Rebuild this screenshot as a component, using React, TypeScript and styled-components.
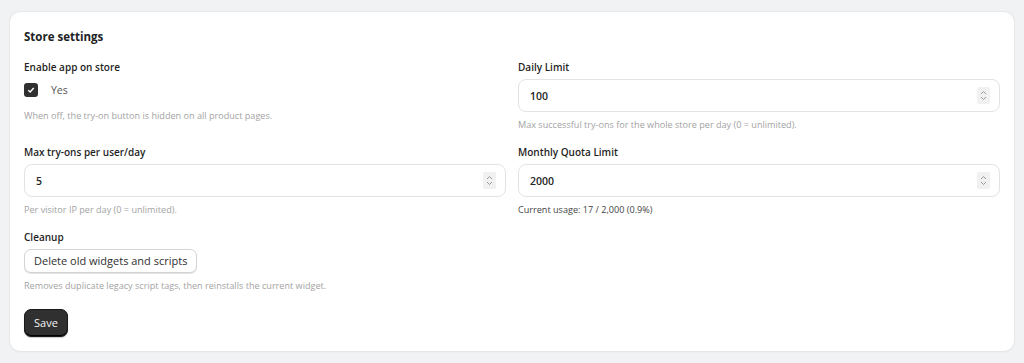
import React from 'react';
import styled, {createGlobalStyle} from 'styled-components';

const GlobalStyle = createGlobalStyle`
  body {
    margin: 0;
    background: #f1f2f4;
    font-family: "Open Sans", "Liberation Sans", sans-serif;
    color: #202223;
  }
`;

const Page = styled.div`
  padding: 12px 10px;
`;

const Card = styled.section`
  background: #fff;
  border-radius: 10px;
  box-shadow: 0 0 0 1px #e6e7e9, 0 1px 2px rgba(0, 0, 0, 0.06);
  padding: 17px 14px 14px;
`;

const Title = styled.h2`
  margin: 0 0 15px;
  font-size: 11.5px;
  font-weight: 700;
  line-height: 16px;
`;

const Grid = styled.div`
  display: grid;
  grid-template-columns: 1fr 1fr;
  column-gap: 12px;
  row-gap: 14px;
`;

const Field = styled.div`
  display: flex;
  flex-direction: column;
  align-items: flex-start;
`;

const Label = styled.div`
  font-size: 10px;
  font-weight: 600;
  line-height: 14px;
  margin-bottom: 5px;
  color: #1f1f1f;
`;

const Help = styled.div<{$dark?: boolean}>`
  font-size: 9.1px;
  line-height: 12px;
  margin-top: 7px;
  color: ${p => (p.$dark ? '#444' : '#a3a3a3')};
`;

const CheckRow = styled.label`
  display: flex;
  align-items: center;
  gap: 13px;
  font-size: 10.5px;
  color: #555;
  height: 20px;
  margin: 1px 0 3px;
`;

const Box = styled.span`
  width: 14px;
  height: 14px;
  border-radius: 3px;
  background: #303030;
  display: flex;
  align-items: center;
  justify-content: center;
`;

const InputBox = styled.div`
  align-self: stretch;
  display: flex;
  align-items: center;
  height: 33px;
  border: 1px solid #e3e3e3;
  border-radius: 8px;
  padding: 0 9px 0 11px;
  box-sizing: border-box;
`;

const Input = styled.input`
  flex: 1;
  border: 0;
  outline: none;
  font: inherit;
  font-size: 10.5px;
  font-weight: 600;
  color: #262626;
  padding: 0;
  background: transparent;
`;

const Spinner = styled.span`
  width: 13px;
  height: 17px;
  background: #f1f1f1;
  border-radius: 2px;
  display: flex;
  align-items: center;
  justify-content: center;
`;

const Button = styled.button<{$primary?: boolean}>`
  font-family: inherit;
  font-size: 11px;
  line-height: 14px;
  border-radius: 7px;
  cursor: pointer;
  padding: ${p => (p.$primary ? '6px 9px' : '4px 9px')};
  color: ${p => (p.$primary ? '#f3f3f3' : '#303030')};
  background: ${p => (p.$primary ? '#303030' : '#fff')};
  border: 1px solid ${p => (p.$primary ? '#1a1a1a' : '#d4d4d4')};
  box-shadow: ${p =>
    p.$primary ? 'inset 0 -1px 0 #000, 0 1px 1px rgba(0,0,0,0.2)' : '0 1px 0 #e3e3e3'};
`;

const SaveRow = styled.div`
  margin-top: 17px;
`;

function NumberField({label, value, help, dark}: {label: string; value: string; help: string; dark?: boolean}) {
  return (
    <Field>
      <Label>{label}</Label>
      <InputBox>
        <Input defaultValue={value} />
        <Spinner>
          <svg width="7" height="11" viewBox="0 0 7 11" fill="none" stroke="#9a9a9a" strokeWidth="1">
            <path d="M1 4 L3.5 1.5 L6 4" />
            <path d="M1 7 L3.5 9.5 L6 7" />
          </svg>
        </Spinner>
      </InputBox>
      <Help $dark={dark}>{help}</Help>
    </Field>
  );
}

export default function App() {
  return (
    <Page>
      <GlobalStyle />
      <Card>
        <Title>Store settings</Title>
        <Grid>
          <Field>
            <Label>Enable app on store</Label>
            <CheckRow>
              <Box>
                <svg width="8" height="8" viewBox="0 0 8 8" fill="none" stroke="#fff" strokeWidth="1.4">
                  <path d="M1.3 4.2 L3.2 6 L6.7 2" />
                </svg>
              </Box>
              Yes
            </CheckRow>
            <Help>When off, the try-on button is hidden on all product pages.</Help>
          </Field>
          <NumberField
            label="Daily Limit"
            value="100"
            help="Max successful try-ons for the whole store per day (0 = unlimited)."
          />
          <NumberField label="Max try-ons per user/day" value="5" help="Per visitor IP per day (0 = unlimited)." />
          <NumberField label="Monthly Quota Limit" value="2000" help="Current usage: 17 / 2,000 (0.9%)" dark />
          <Field>
            <Label>Cleanup</Label>
            <Button>Delete old widgets and scripts</Button>
            <Help>Removes duplicate legacy script tags, then reinstalls the current widget.</Help>
          </Field>
        </Grid>
        <SaveRow>
          <Button $primary>Save</Button>
        </SaveRow>
      </Card>
    </Page>
  );
}
